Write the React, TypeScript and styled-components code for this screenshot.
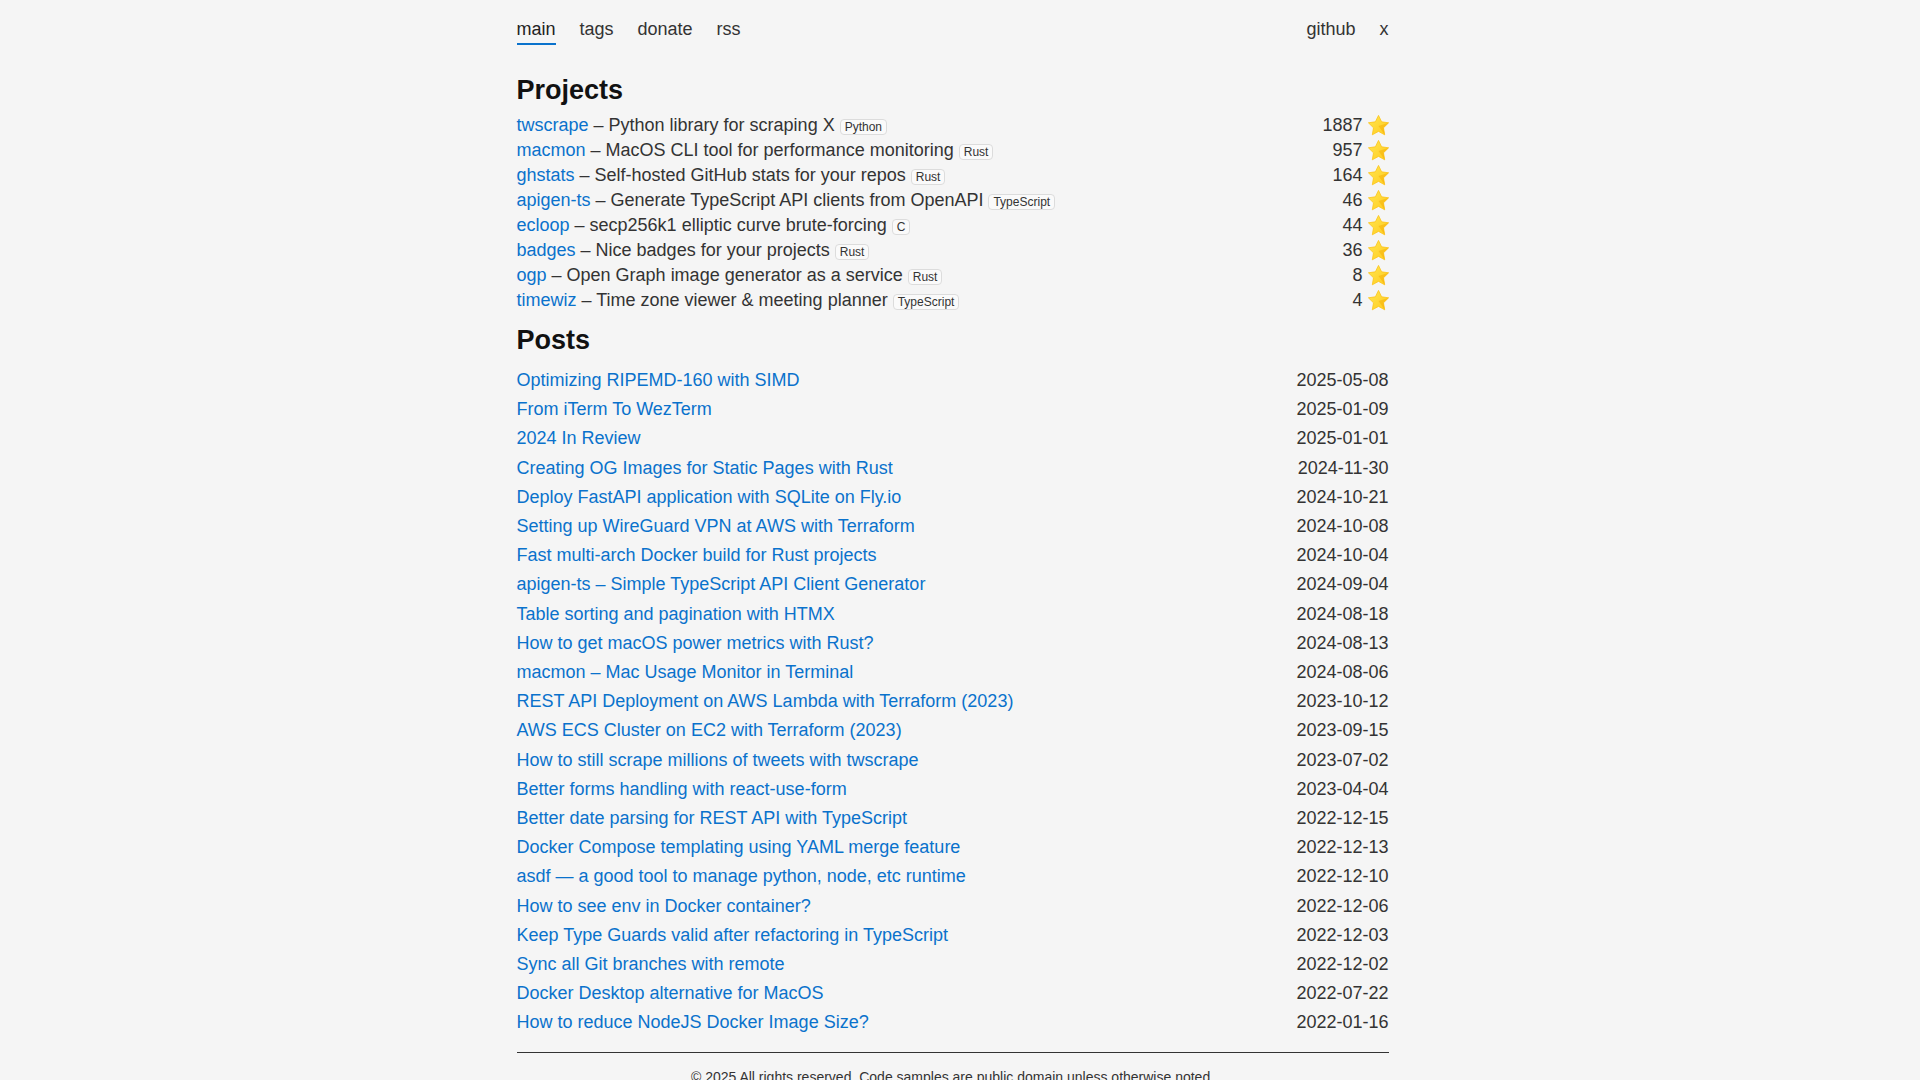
import React from "react";
import styled, { createGlobalStyle } from "styled-components";

const GlobalStyle = createGlobalStyle`
    html, body {
        margin: 0;
        background: #f5f5f5;
    }
    body {
        color: #333;
        font-family: "Liberation Sans", Arial, sans-serif;
        font-size: 18px;
    }
    a {
        color: #0a72cc;
        text-decoration: none;
    }
`;

const Shell = styled.div`
    padding-right: 15px;
`;

const Page = styled.div`
    max-width: 872px;
    margin: 0 auto;
    padding-bottom: 24px;
`;

const Nav = styled.nav`
    display: flex;
    justify-content: space-between;
    padding-top: 17px;
    line-height: 25px;
`;

const NavGroup = styled.div`
    display: flex;
    gap: 24px;
`;

const NavLink = styled.a<{ $active?: boolean }>`
    color: ${(p) => (p.$active ? "#222" : "#333")};
    padding-bottom: 1px;
    border-bottom: 2px solid ${(p) => (p.$active ? "#0a72cc" : "transparent")};
`;

const Section = styled.section<{ $top: number }>`
    margin-top: ${(p) => p.$top}px;
`;

const Heading = styled.h2<{ $bottom: number }>`
    margin: 0 0 ${(p) => p.$bottom}px;
    font-size: 27px;
    line-height: 32px;
    font-weight: 700;
    color: #111;
`;

const ProjectRow = styled.div`
    display: flex;
    justify-content: space-between;
    line-height: 25px;
`;

const Tag = styled.span`
    display: inline-block;
    font-size: 12px;
    line-height: 14px;
    padding: 0 4px;
    border: 1px solid #dcdcdc;
    border-radius: 4px;
    background: #fafafa;
    color: #333;
`;

const Stars = styled.span`
    display: flex;
    align-items: center;
    gap: 5px;
`;

const StarIcon = styled.svg`
    width: 21px;
    height: 21px;
    flex-shrink: 0;
`;

const PostRow = styled.div`
    display: flex;
    justify-content: space-between;
    padding: 2px 0;
    line-height: 25.2px;
`;

const PostDate = styled.span`
    color: #333;
`;

const Rule = styled.hr`
    margin: 14px 0 0;
    border: 0;
    border-top: 1px solid #333;
`;

const Footer = styled.footer`
    margin-top: 14px;
    text-align: center;
    font-size: 14px;
    line-height: 20px;
    color: #333;
`;

const projects = [
    { name: "twscrape", desc: "Python library for scraping X", lang: "Python", stars: 1887 },
    { name: "macmon", desc: "MacOS CLI tool for performance monitoring", lang: "Rust", stars: 957 },
    { name: "ghstats", desc: "Self-hosted GitHub stats for your repos", lang: "Rust", stars: 164 },
    { name: "apigen-ts", desc: "Generate TypeScript API clients from OpenAPI", lang: "TypeScript", stars: 46 },
    { name: "ecloop", desc: "secp256k1 elliptic curve brute-forcing", lang: "C", stars: 44 },
    { name: "badges", desc: "Nice badges for your projects", lang: "Rust", stars: 36 },
    { name: "ogp", desc: "Open Graph image generator as a service", lang: "Rust", stars: 8 },
    { name: "timewiz", desc: "Time zone viewer & meeting planner", lang: "TypeScript", stars: 4 },
];

const posts = [
    ["Optimizing RIPEMD-160 with SIMD", "2025-05-08"],
    ["From iTerm To WezTerm", "2025-01-09"],
    ["2024 In Review", "2025-01-01"],
    ["Creating OG Images for Static Pages with Rust", "2024-11-30"],
    ["Deploy FastAPI application with SQLite on Fly.io", "2024-10-21"],
    ["Setting up WireGuard VPN at AWS with Terraform", "2024-10-08"],
    ["Fast multi-arch Docker build for Rust projects", "2024-10-04"],
    ["apigen-ts – Simple TypeScript API Client Generator", "2024-09-04"],
    ["Table sorting and pagination with HTMX", "2024-08-18"],
    ["How to get macOS power metrics with Rust?", "2024-08-13"],
    ["macmon – Mac Usage Monitor in Terminal", "2024-08-06"],
    ["REST API Deployment on AWS Lambda with Terraform (2023)", "2023-10-12"],
    ["AWS ECS Cluster on EC2 with Terraform (2023)", "2023-09-15"],
    ["How to still scrape millions of tweets with twscrape", "2023-07-02"],
    ["Better forms handling with react-use-form", "2023-04-04"],
    ["Better date parsing for REST API with TypeScript", "2022-12-15"],
    ["Docker Compose templating using YAML merge feature", "2022-12-13"],
    ["asdf — a good tool to manage python, node, etc runtime", "2022-12-10"],
    ["How to see env in Docker container?", "2022-12-06"],
    ["Keep Type Guards valid after refactoring in TypeScript", "2022-12-03"],
    ["Sync all Git branches with remote", "2022-12-02"],
    ["Docker Desktop alternative for MacOS", "2022-07-22"],
    ["How to reduce NodeJS Docker Image Size?", "2022-01-16"],
];

// emoji-like star, drawn since no emoji font is around
const Star = () => (
    <StarIcon viewBox="1.5 1.5 21 21">
        <defs>
            <linearGradient id="starFill" x1="0" y1="0" x2="1" y2="1">
                <stop offset="0" stopColor="#ffe650" />
                <stop offset="1" stopColor="#ffcb1f" />
            </linearGradient>
        </defs>
        <path
            d="M12 1.9l3.1 6.4 7 1-5.1 5 1.2 7L12 17.9l-6.2 3.4 1.2-7-5.1-5 7-1z"
            fill="url(#starFill)"
            stroke="#fcc419"
            strokeWidth="0.8"
            strokeLinejoin="round"
        />
        <path d="M12 12.6l10.1-3.3-5.1 5 1.2 7z" fill="#f5a800" opacity="0.45" />
    </StarIcon>
);

const App = () => {
    return (
        <Shell>
            <GlobalStyle />
            <Page>
                <Nav>
                    <NavGroup>
                        <NavLink href="#" $active>main</NavLink>
                        <NavLink href="#">tags</NavLink>
                        <NavLink href="#">donate</NavLink>
                        <NavLink href="#">rss</NavLink>
                    </NavGroup>
                    <NavGroup>
                        <NavLink href="#">github</NavLink>
                        <NavLink href="#">x</NavLink>
                    </NavGroup>
                </Nav>

                <Section $top={29}>
                    <Heading $bottom={7}>Projects</Heading>
                    {projects.map((p) => (
                        <ProjectRow key={p.name}>
                            <span>
                                <a href="#">{p.name}</a> – {p.desc} <Tag>{p.lang}</Tag>
                            </span>
                            <Stars>
                                {p.stars}
                                <Star />
                            </Stars>
                        </ProjectRow>
                    ))}
                </Section>

                <Section $top={11}>
                    <Heading $bottom={10}>Posts</Heading>
                    {posts.map(([title, date]) => (
                        <PostRow key={title}>
                            <a href="#">{title}</a>
                            <PostDate>{date}</PostDate>
                        </PostRow>
                    ))}
                </Section>

                <Rule />
                <Footer>© 2025 All rights reserved. Code samples are public domain unless otherwise noted.</Footer>
            </Page>
        </Shell>
    );
};

export default App;
